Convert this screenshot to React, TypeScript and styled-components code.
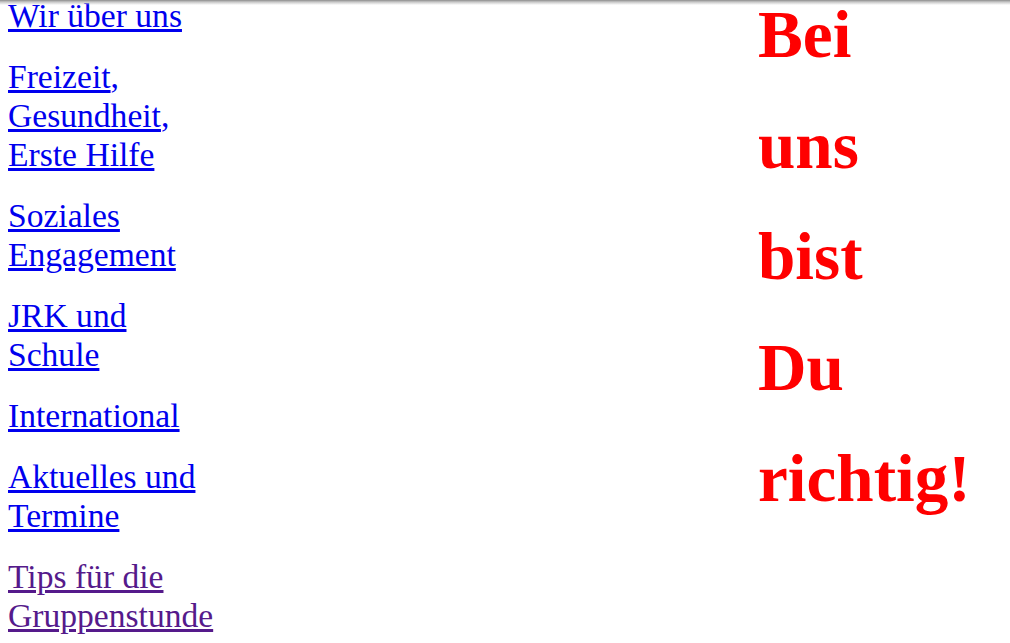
import React from "react";
import styled, { createGlobalStyle } from "styled-components";

const GlobalStyle = createGlobalStyle`
  html, body {
    margin: 0;
    padding: 0;
    background: #ffffff;
    overflow: hidden;
  }
  body {
    font-family: "Liberation Serif", "Times New Roman", serif;
  }
`;

// thin grey shade along the top edge of the viewport
const TopShade = styled.div`
  position: fixed;
  top: 0;
  left: 0;
  right: 0;
  height: 5px;
  background: linear-gradient(to bottom, #8c8c8c 0%, #c8c8c8 40%, rgba(255, 255, 255, 0) 100%);
  pointer-events: none;
`;

// the page is scrolled a little, so the first lines are cut at the top
const Page = styled.div`
  display: flex;
  align-items: flex-start;
  margin-top: -26px;
`;

const Nav = styled.nav`
  flex: none;
  width: 215px;
  padding-left: 8px;
`;

const NavItem = styled.p`
  margin: 22px 0;
  font-size: 33.6px;
  line-height: 39px;
  color: #0000ee;
`;

const NavLink = styled.a<{ $visited?: boolean }>`
  color: ${({ $visited }) => ($visited ? "#551a8b" : "#0000ee")};
  text-decoration: underline;
`;

const Slogan = styled.h1`
  flex: none;
  margin: 5px 0 0 535px;
  font-size: 67.2px;
  font-weight: bold;
  line-height: 111px;
  color: #ff0000;
`;

const Word = styled.span`
  display: block;
  white-space: nowrap;
`;

const links: { label: string; visited?: boolean }[] = [
  { label: "Wir über uns" },
  { label: "Freizeit, Gesundheit, Erste Hilfe" },
  { label: "Soziales Engagement" },
  { label: "JRK und Schule" },
  { label: "International" },
  { label: "Aktuelles und Termine" },
  { label: "Tips für die Gruppenstunde", visited: true },
];

const slogan = ["Bei", "uns", "bist", "Du", "richtig!"];

export default function App() {
  return (
    <>
      <GlobalStyle />
      <Page>
        <Nav>
          {links.map((l) => {
            // the comma after "Freizeit" etc. stays outside the underline
            const parts = l.label.split(", ");
            return (
              <NavItem key={l.label}>
                {parts.map((p, i) => (
                  <React.Fragment key={p}>
                    <NavLink href="#" $visited={l.visited}>
                      {p}
                    </NavLink>
                    {i < parts.length - 1 ? ", " : null}
                  </React.Fragment>
                ))}
              </NavItem>
            );
          })}
        </Nav>
        <Slogan>
          {slogan.map((w) => (
            <Word key={w}>{w}</Word>
          ))}
        </Slogan>
      </Page>
      <TopShade />
    </>
  );
}
